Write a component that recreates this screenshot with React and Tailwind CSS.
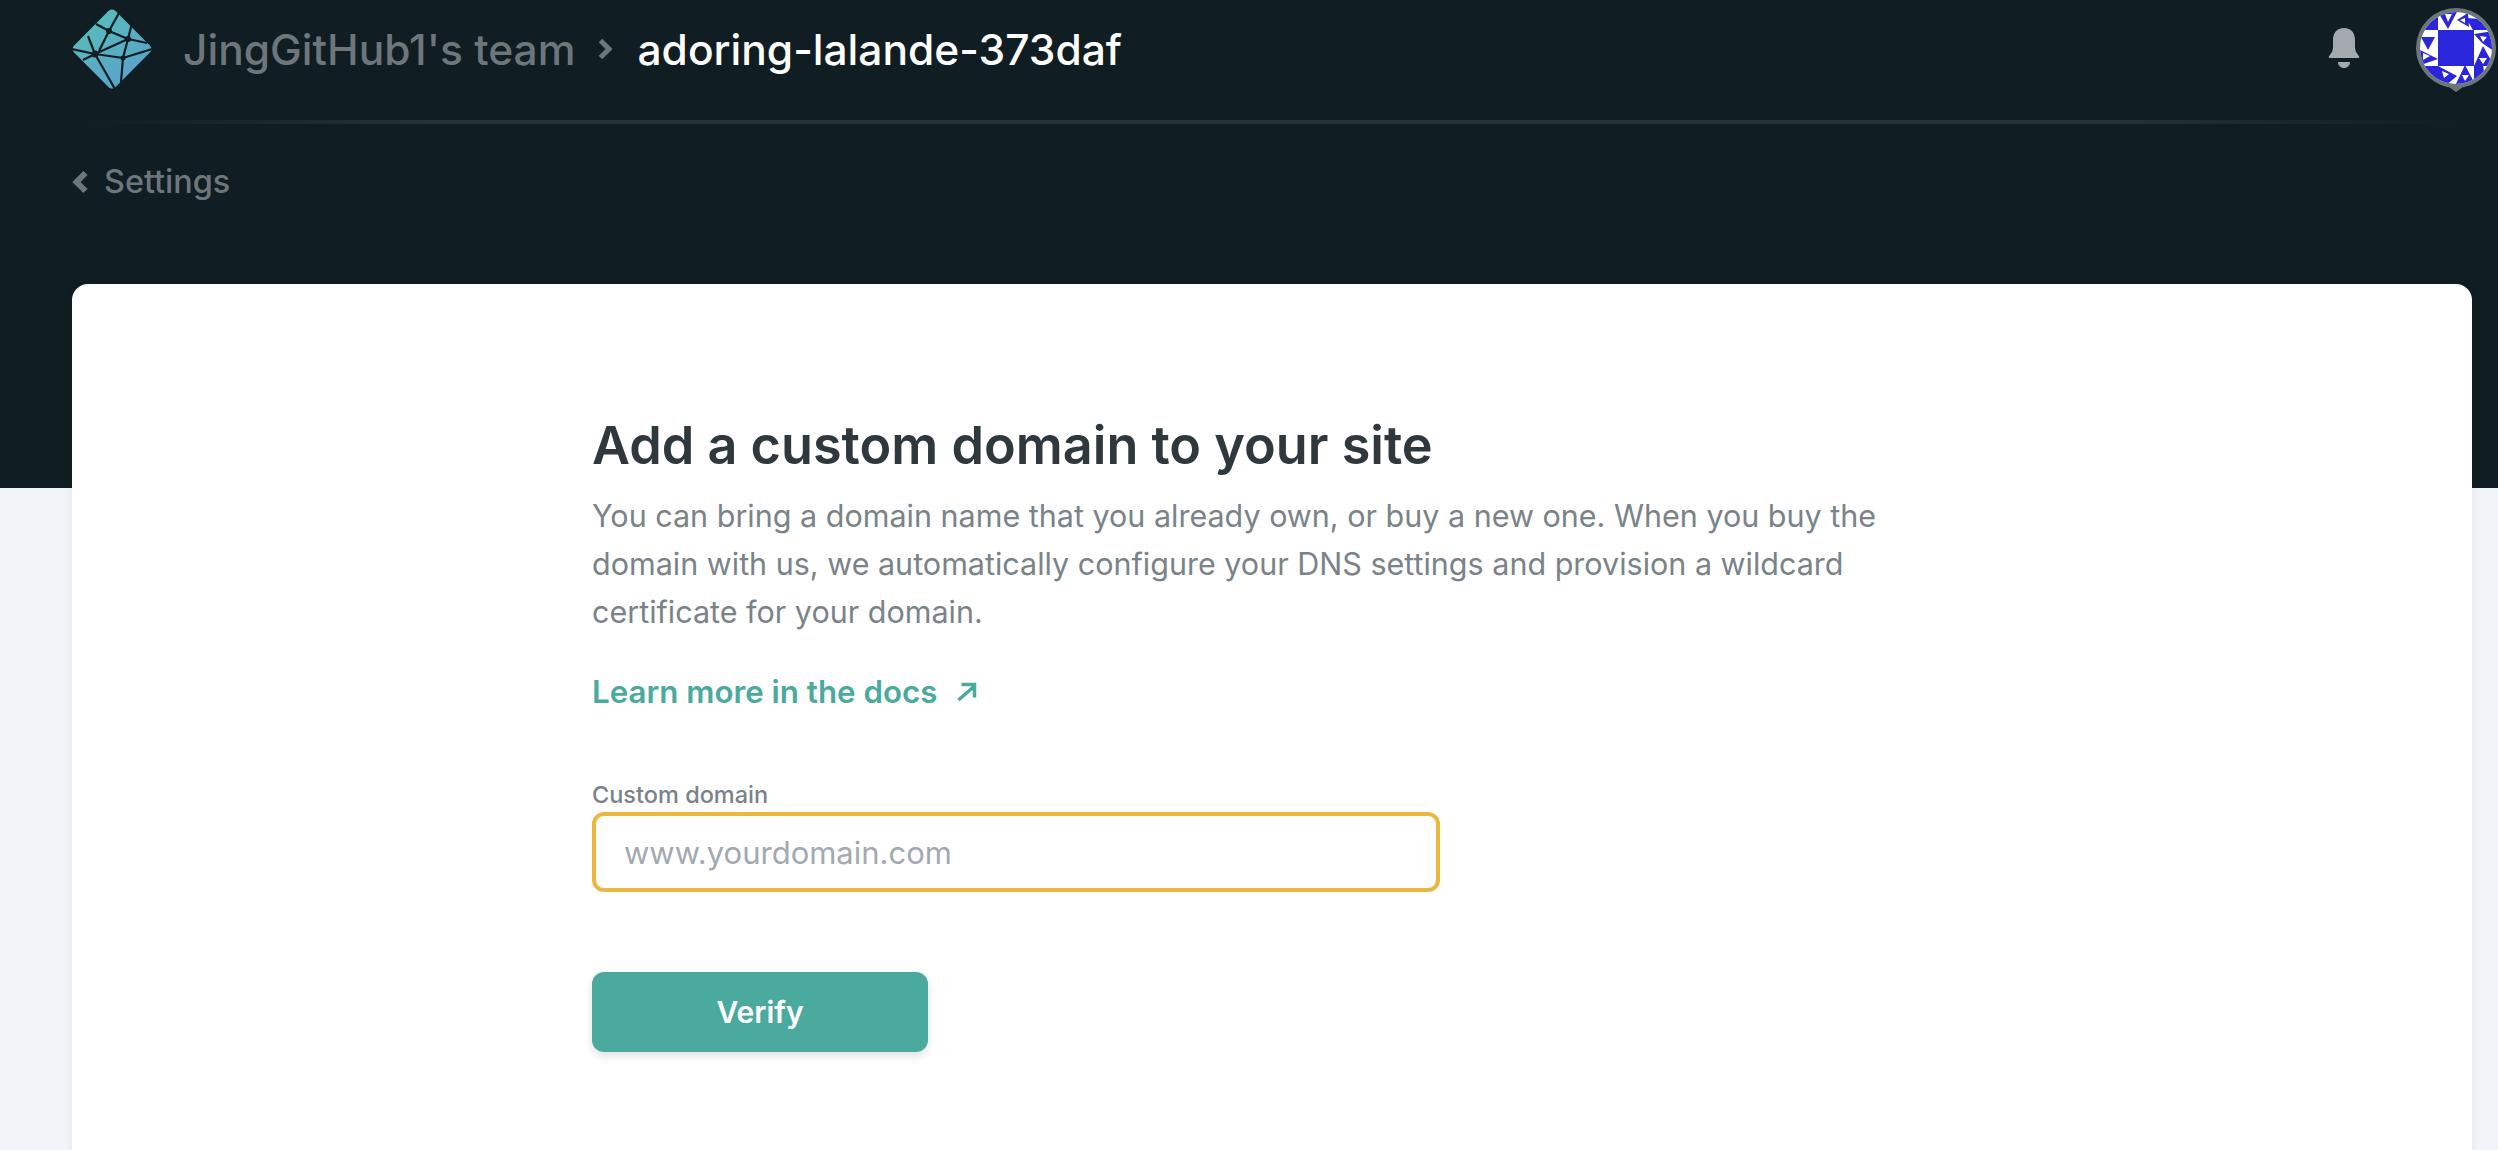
const font_stack = "font-['Inter','Liberation_Sans',sans-serif]";

function Logo() {
    return (
        <svg width="80" height="80" viewBox="0 0 80 80" aria-hidden="true">
            <defs>
                <linearGradient id="logo_fill" x1="10%" y1="10%" x2="80%" y2="95%">
                    <stop offset="0" stopColor="#56c0b8" />
                    <stop offset="1" stopColor="#5b9fcb" />
                </linearGradient>
            </defs>
            <path
                d="M40 0.500c1.400 0 2.600.6 3.600 1.600l34.300 34.300c2 2 2 5.200 0 7.200L43.600 77.900c-2 2-5.200 2-7.200 0L2.100 43.600c-2-2-2-5.200 0-7.200L36.400 2.100c1-1 2.200-1.600 3.600-1.600z"
                fill="url(#logo_fill)"
            />
            <g stroke="#101d23" strokeWidth="2.200" fill="none">
                <path d="M24 15L37 22L56 30" />
                <path d="M37 22L47 4" />
                <path d="M56 30L60 14" />
                <path d="M56 30L75 34" />
                <path d="M37 22L27 42" />
                <path d="M16 27L23 45L0 40" />
                <path d="M23 45L56 30L51 49L49 73" />
                <path d="M23 45L51 49L80 40" />
                <path d="M23 45L11 51" />
                <path d="M23 45L43 80" />
            </g>
            <g fill="#101d23">
                <circle cx="37" cy="22" r="3" />
                <circle cx="56" cy="30" r="3" />
                <circle cx="23" cy="45" r="3.500" />
                <circle cx="51" cy="49" r="2.500" />
            </g>
        </svg>
    );
}

function Avatar() {
    return (
        <svg width="80" height="92" viewBox="0 0 80 92" aria-hidden="true">
            <defs>
                <clipPath id="avatar_clip">
                    <circle cx="40" cy="40" r="36" />
                </clipPath>
            </defs>
            <path d="M29 76L40 84L51 76Z" fill="#6d767b" />
            <circle cx="40" cy="40" r="40" fill="#6d767b" />
            <g clipPath="url(#avatar_clip)">
                <rect width="80" height="80" fill="#ffffff" />
                <rect x="22" y="22" width="36" height="36" fill="#2a26dc" />
                <path
                    fill="#2a26dc"
                    d="M22 4L42 2L32 21ZM41 12L52 5L53 19ZM50 10L78 12L78 22L57 22ZM2 22L22 7L22 22ZM5 29L19 29L12 42ZM2 41L22 51L2 58ZM6 58L22 58L41 68L29 78L20 74ZM58 26L78 23L78 43L66 35ZM67 38L78 58L58 58ZM58 58L67 57L70 76L58 76ZM49 57L59 76L39 78Z"
                />
                <path
                    fill="#ffffff"
                    d="M29 6L36 6L32 14ZM44 12L49 10L49 15ZM7 45L14 48L7 52ZM64 28L71 29L67 34ZM63 50L71 50L67 56ZM46 67L53 67L49 73ZM26 63L33 66L28 70Z"
                />
            </g>
        </svg>
    );
}

function Bell() {
    return (
        <svg width="32" height="40" viewBox="0 0 32 40" aria-hidden="true" fill="#a3a9ac">
            <path d="M16 0C8.500 0 5 5.500 5 12v7c0 3.500-1.500 6-3.500 8.500C0 29.500 0.500 30 3 30h26c2.500 0 3-.5 1.500-2.500C28.500 25 27 22.500 27 19v-7C27 5.500 23.500 0 16 0z" />
            <path d="M10 34h12c0 3.500-2.500 6-6 6s-6-2.500-6-6z" />
        </svg>
    );
}

function Header() {
    return (
        <header className="h-[488px] bg-[#101d23] pr-[26px] pl-[72px]">
            <div className="flex h-[120px] items-start">
                <div className="flex flex-1 items-center pt-2">
                    <Logo />
                    <span className="mt-[2px] ml-[31px] text-[42.500px] leading-[80px] font-medium text-[#6d767b]">
                        JingGitHub1's team
                    </span>
                    <svg width="16" height="24" viewBox="0 0 16 24" className="mx-[23px]" aria-hidden="true">
                        <path d="M2.500 3.500l8.500 8.500-8.500 8.500" stroke="#6d767b" strokeWidth="5" fill="none" />
                    </svg>
                    <span className="mt-[2px] text-[42.500px] leading-[80px] font-medium text-white">
                        adoring-lalande-373daf
                    </span>
                </div>
                <div className="flex items-start pt-2">
                    <div className="mt-[20px]">
                        <Bell />
                    </div>
                    <div className="-mr-[24px] ml-[56px]">
                        <Avatar />
                    </div>
                </div>
            </div>
            <div className="h-[4px] bg-[linear-gradient(90deg,#101d23,#253238_15%,#253238_85%,#101d23)]" />
            <div className="mt-[38px] flex items-center text-[#6d767b]">
                <svg width="16" height="24" viewBox="0 0 16 24" className="mr-[16px]" aria-hidden="true">
                    <path d="M13.500 3L4.500 12l9 9" stroke="#6d767b" strokeWidth="6" fill="none" />
                </svg>
                <span className="text-[32.400px] leading-[40px] font-medium">Settings</span>
            </div>
        </header>
    );
}

function DomainForm() {
    return (
        <div className="w-[1300px] pt-[129px]">
            <h1 className="text-[52.200px] leading-[64px] font-semibold text-[#2e383d]">
                Add a custom domain to your site
            </h1>
            <p className="mt-[15px] text-[30.500px] leading-[48px] text-[#7a8388]">
                You can bring a domain name that you already own, or buy a new one. When you buy the
                <br />
                domain with us, we automatically configure your DNS settings and provision a wildcard
                <br />
                certificate for your domain.
            </p>
            <a className="mt-[32px] flex items-center text-[31.300px] leading-[48px] font-semibold text-[#4aaa9e]">
                Learn more in the docs
                <svg width="20" height="20" viewBox="0 0 20 20" className="ml-[19px]" aria-hidden="true">
                    <path d="M1.500 18L17 4.500M4.500 2.500h13v13" stroke="#4aaa9e" strokeWidth="3.500" fill="none" />
                </svg>
            </a>
            <label className="mt-[63px] block text-[23.500px] leading-[32px] font-medium text-[#7a8388]">
                Custom domain
            </label>
            <input
                readOnly
                placeholder="www.yourdomain.com"
                className="mt-[1px] block h-[80px] w-[848px] rounded-[12px] border-4 border-[#ecb73c] bg-white px-[28px] text-[31px] text-[#2e383d] outline-none placeholder:text-[#a3a9b0]"
            />
            <button
                type="button"
                className="mt-[80px] h-[80px] w-[336px] rounded-[12px] bg-[#4aaa9e] text-[30px] font-semibold text-white shadow-[0_4px_10px_rgba(0,0,0,0.12)]"
            >
                Verify
            </button>
        </div>
    );
}

export default function App() {
    return (
        <div className={`h-[1150px] overflow-hidden bg-[#f0f4f8] ${font_stack}`}>
            <Header />
            <main className="-mt-[204px] mr-[26px] ml-[72px] h-[870px] rounded-t-[16px] bg-white pl-[520px] shadow-[0_0_8px_rgba(0,0,0,0.06)]">
                <DomainForm />
            </main>
        </div>
    );
}
